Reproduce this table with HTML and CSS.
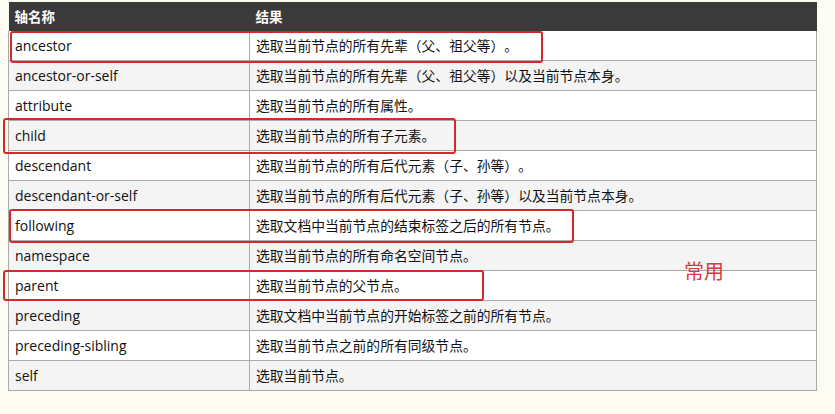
FILE: index.html
```html
<!DOCTYPE html>
<html lang="zh">
<head>
<meta charset="utf-8">
<link rel="stylesheet" href="styles.css">
</head>
<body>
<div class="wrap">
  <table class="axes">
    <thead>
      <tr><th class="c1">轴名称</th><th>结果</th></tr>
    </thead>
    <tbody>
      <tr><td class="c1">ancestor</td><td>选取当前节点的所有先辈（父、祖父等）。</td></tr>
      <tr><td class="c1">ancestor-or-self</td><td>选取当前节点的所有先辈（父、祖父等）以及当前节点本身。</td></tr>
      <tr><td class="c1">attribute</td><td>选取当前节点的所有属性。</td></tr>
      <tr><td class="c1">child</td><td>选取当前节点的所有子元素。</td></tr>
      <tr><td class="c1">descendant</td><td>选取当前节点的所有后代元素（子、孙等）。</td></tr>
      <tr><td class="c1">descendant-or-self</td><td>选取当前节点的所有后代元素（子、孙等）以及当前节点本身。</td></tr>
      <tr><td class="c1">following</td><td>选取文档中当前节点的结束标签之后的所有节点。</td></tr>
      <tr><td class="c1">namespace</td><td>选取当前节点的所有命名空间节点。</td></tr>
      <tr><td class="c1">parent</td><td>选取当前节点的父节点。</td></tr>
      <tr><td class="c1">preceding</td><td>选取文档中当前节点的开始标签之前的所有节点。</td></tr>
      <tr><td class="c1">preceding-sibling</td><td>选取当前节点之前的所有同级节点。</td></tr>
      <tr><td class="c1">self</td><td>选取当前节点。</td></tr>
    </tbody>
  </table>
  <div class="mark mark-ancestor"></div>
  <div class="mark mark-child"></div>
  <div class="mark mark-following"></div>
  <div class="mark mark-parent"></div>
  <div class="note">常用</div>
</div>
</body>
</html>
```

FILE: styles.css
```css
html, body {
  margin: 0;
  padding: 0;
  background: #fcfcf2;
}
body {
  width: 835px;
  height: 414px;
  overflow: hidden;
}
.wrap {
  position: relative;
  padding: 2px 0 0 8px;
}
.axes {
  border-collapse: collapse;
  width: 809px;
  table-layout: fixed;
  font-family: "Noto Sans CJK SC", "Open Sans", sans-serif;
  font-size: 13.8px;
  color: #111;
  text-spacing-trim: space-all;
}
.axes th {
  background: #3a3a3a;
  color: #fff;
  font-weight: bold;
  text-align: left;
  height: 29px;
  padding: 0 6px;
  font-size: 13.5px;
  border: none;
  line-height: 1;
}
.axes th.c1, .axes td.c1 {
  width: 229px;
}
.axes td {
  height: 29px;
  padding: 0 6px;
  border: 1px solid #aaaaaa;
  background: #ffffff;
  white-space: nowrap;
  line-height: 1;
}
.axes tbody tr:first-child td {
  border-top: none;
}
.axes td.c1 {
  font-family: "Open Sans", "Noto Sans", sans-serif;
  font-size: 14px;
  color: #111;
}
.axes tbody tr:nth-child(even) td {
  background: #f4f4f4;
}
.mark {
  position: absolute;
  border: 2.5px solid #d5282c;
  border-radius: 3px;
  box-sizing: border-box;
}
.mark-ancestor { left: 10px; top: 31px; width: 533px; height: 32px; }
.mark-child { left: 3px; top: 118px; width: 453px; height: 36px; }
.mark-following { left: 9px; top: 209px; width: 565px; height: 34px; }
.mark-parent { left: 3px; top: 270px; width: 481px; height: 31px; }
.note {
  position: absolute;
  left: 684px;
  top: 258px;
  font-family: "Noto Sans CJK SC", sans-serif;
  font-size: 20px;
  line-height: 26px;
  color: #d73a3f;
}
```
